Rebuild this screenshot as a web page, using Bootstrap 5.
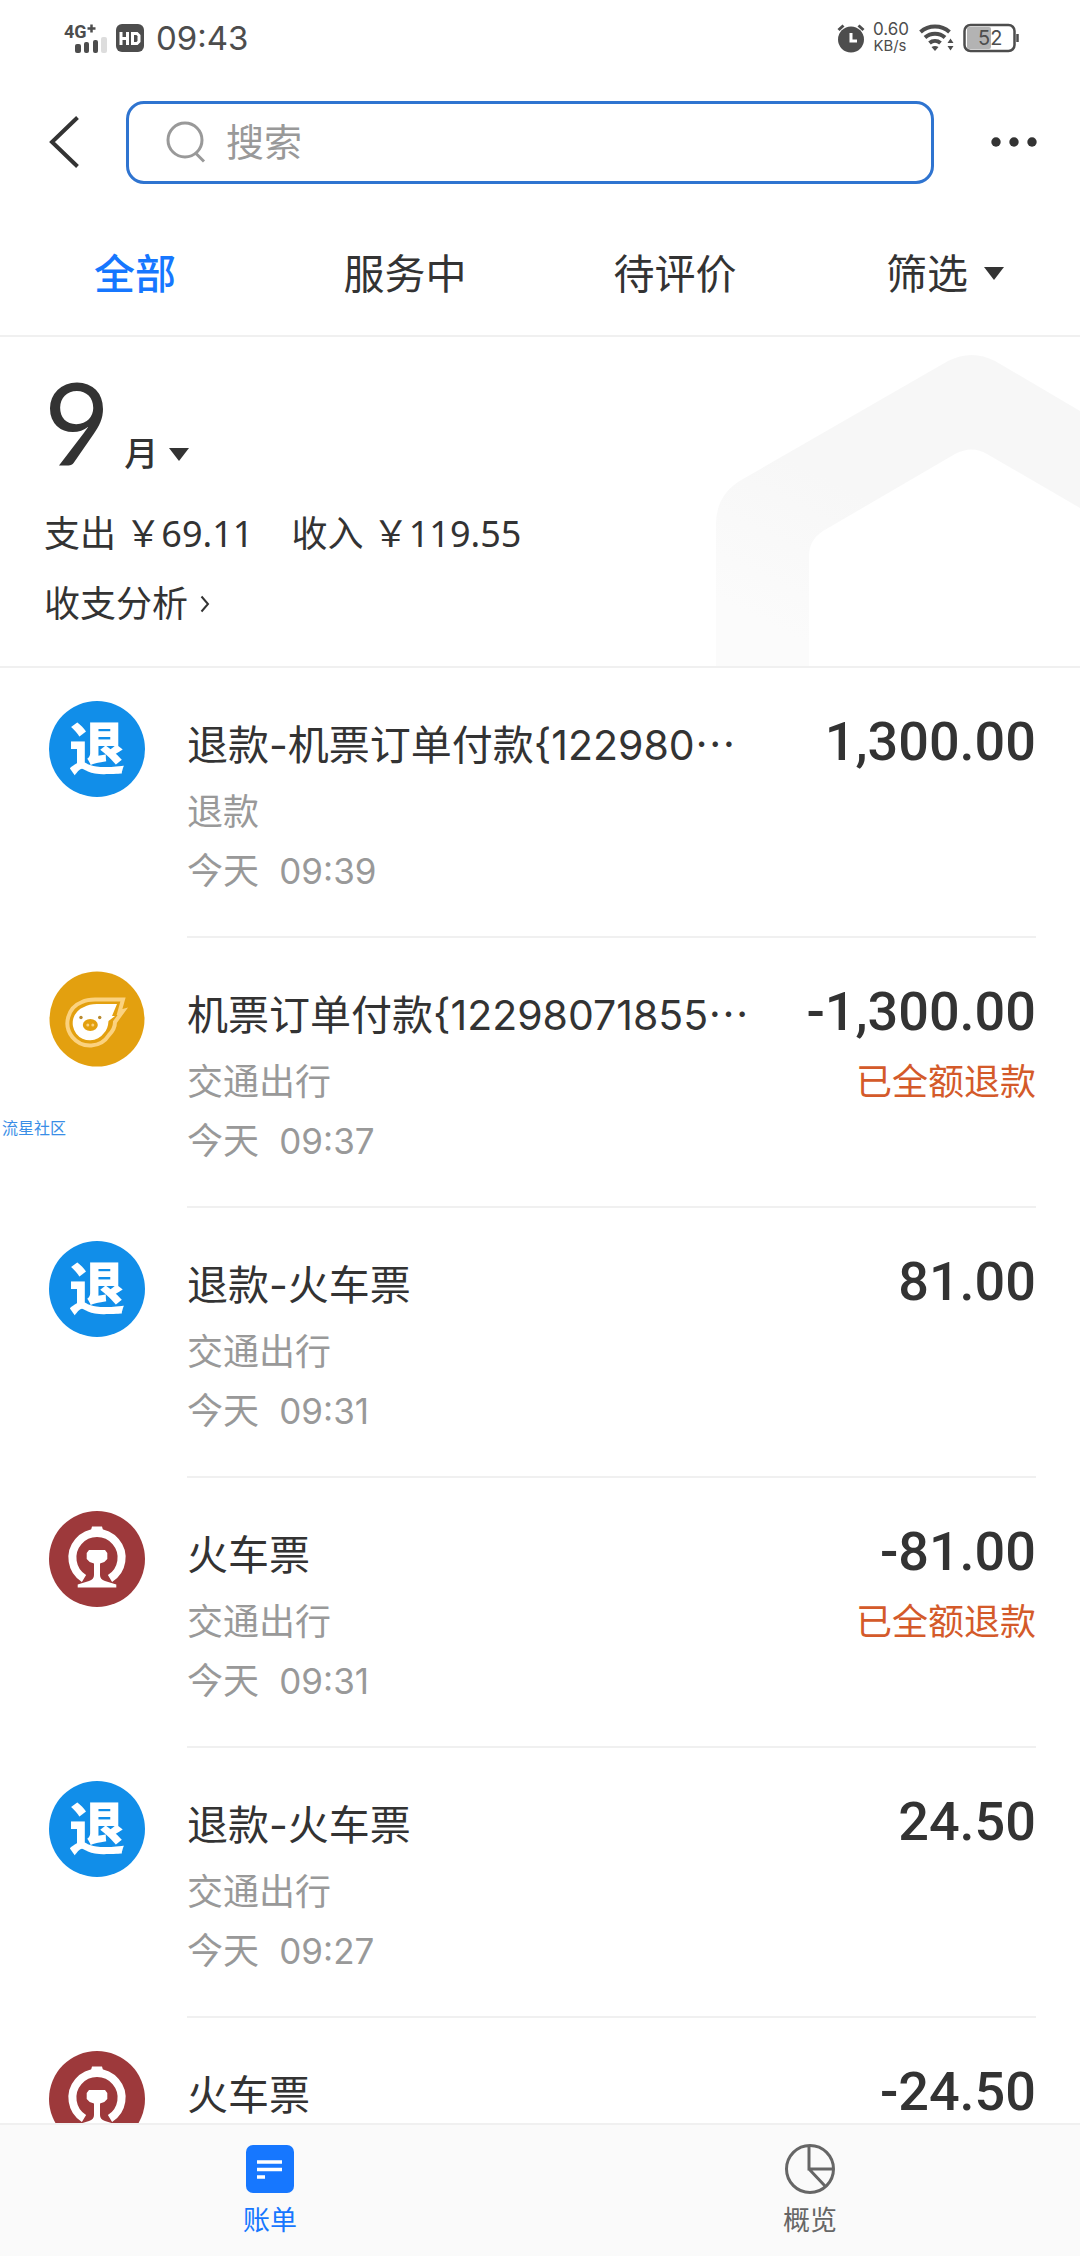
<!DOCTYPE html>
<html lang="zh-CN">
<head>
<meta charset="utf-8">
<meta name="viewport" content="width=device-width, initial-scale=1">
<title>账单</title>
<link href="https://cdn.jsdelivr.net/npm/bootstrap@5.3.0/dist/css/bootstrap.min.css" rel="stylesheet">
<style>
  :root { --ink: #333; --muted: #999; --brand: #1677ff; --rule: #f0f0f0; }
  body { font-family: Inter, "Noto Sans CJK SC", sans-serif; color: var(--ink); background: #fff; }
  svg { display: block; flex: none; }
  .screen { height: 100vh; }
  .status-bar { height: 76px; padding: 0 61px 0 64px; color: #4d4d4d; }
  .clock { font-size: 33px; line-height: 40px; }
  .rate { font-size: 17px; line-height: 17px; width: 34px; }
  .search-bar { height: 132px; padding: 0 43px 0 49px; }
  .search-box { height: 83px; margin: 0 57px 0 47px; padding: 0 37px; gap: 20px; border: 3px solid #2f74d0; border-radius: 18px; color: var(--muted); }
  .search-box input { font-size: 38px; line-height: 44px; padding: 0; border: 0; background: none; outline: none; }
  .search-box input::placeholder { color: var(--muted); opacity: 1; }
  .filter-tabs { height: 129px; padding-top: 4px; border-bottom: 2px solid var(--rule); }
  .filter-tabs .nav-link { font-size: 41px; line-height: 48px; padding: 0; color: var(--ink); white-space: nowrap; gap: 16px; }
  .filter-tabs .nav-link.active { color: var(--brand); font-weight: 500; }
  .month-panel { height: 331px; border-bottom: 2px solid var(--rule); }
  .month-panel > .house { position: absolute; right: 0; bottom: 0; }
  .month-body { padding: 35px 45px 0 44px; }
  .month-pick, .month-pick:hover { gap: 14px; color: var(--ink); }
  .month-num { font-family: Lato, sans-serif; font-size: 114px; line-height: 100px; }
  .month-unit { font-size: 34px; line-height: 36px; font-weight: 500; gap: 11px; }
  .totals { font-family: "Noto Sans", "Noto Sans CJK SC", sans-serif; font-size: 36px; line-height: 44px; gap: 38px; margin-top: 40px; }
  .analysis { font-size: 36px; line-height: 44px; gap: 12px; margin-top: 26px; color: var(--ink); }
  .bill-row { height: 270px; padding: 33px 44px 0 49px; gap: 42px; }
  .bill-icon { width: 96px; height: 96px; background: #118ee9; color: #fff; font-size: 56px; font-weight: 900; line-height: 96px; }
  .bill-body { border-bottom: 2px solid var(--rule); padding-top: 17px; gap: 24px; }
  .bill-title { font-size: 41px; line-height: 48px; margin-top: 3px; }
  .dots { font-family: "Noto Sans CJK SC", sans-serif; line-height: 1; }
  .bill-meta { font-size: 36px; line-height: 44px; color: var(--muted); }
  .bill-meta.kind { margin-top: 21px; }
  .bill-meta.time { margin-top: 15px; }
  .bill-meta .hm { font-size: 35px; }
  .amount { font-family: Roboto, sans-serif; font-weight: 500; font-size: 54px; line-height: 48px; }
  .refunded { font-size: 36px; line-height: 44px; margin-top: 24px; color: #d45a2a; }
  .side-tag { position: absolute; left: 2px; top: 1118px; font-size: 16px; line-height: 20px; color: #3a8ee6; }
  .bottom-nav { height: 133px; background: #fafafa; border-top: 2px solid var(--rule); }
  .bottom-nav .nav-link { padding: 18px 0 0; gap: 10px; font-size: 27px; line-height: 32px; color: #666; }
  .bottom-nav .nav-link.active { color: var(--brand); }
</style>
<script src="https://cdn.jsdelivr.net/npm/bootstrap@5.3.0/dist/js/bootstrap.bundle.min.js"></script>
</head>
<body>
<svg width="0" height="0" class="position-absolute" aria-hidden="true">
  <symbol id="railway" viewBox="0 0 96 96">
    <circle cx="48" cy="48" r="48" fill="#9d393b"/>
    <path d="M35 67.500A24.600 24.600 0 1 1 61 67.500" fill="none" stroke="#fff" stroke-width="8"/>
    <path d="M38 21l4-2 1-3.500h10l1 3.500 4 2z" fill="#fff"/>
    <path d="M40 39h16l2.300 3v6l-3 3-4.300 1.500V64q0 4.500 5 6l11.300 3.500v3H28.700v-3L40 70q5-1.500 5-6V52.500L40.700 51l-3-3v-6z" fill="#fff"/>
  </symbol>
</svg>
<div class="screen d-flex flex-column overflow-hidden position-relative">
  <header class="status-bar d-flex align-items-center justify-content-between flex-shrink-0">
    <div class="d-flex align-items-center">
      <svg width="44" height="32" viewBox="0 0 44 32" aria-label="4G+">
        <text x="0" y="16" font-size="18" font-weight="700" fill="#4d4d4d" font-family="Roboto">4G</text>
        <path d="M23.500 6.500h8M27.500 2.500v8" stroke="#4d4d4d" stroke-width="2.500"/>
        <g fill="#4d4d4d"><rect x="11" y="22" width="6" height="9" rx="2"/><rect x="20" y="20" width="5" height="11" rx="2"/><rect x="29" y="18" width="5" height="13" rx="2"/></g>
        <rect x="37" y="15" width="6" height="16" rx="2" fill="#ddd"/>
      </svg>
      <svg class="ms-2" width="28" height="28" viewBox="0 0 28 28" aria-label="HD">
        <rect width="28" height="28" rx="6" fill="#4d4d4d"/>
        <path d="M5 8v13M11.500 8v13M5 14.500h6.500M16.500 9.500v10h4.500l2-2v-6l-2-2z" fill="none" stroke="#fff" stroke-width="3"/>
      </svg>
      <span class="clock ms-2 ps-1">09:43</span>
    </div>
    <div class="d-flex align-items-center gap-2">
      <svg width="28" height="30" viewBox="0 0 28 30" aria-label="闹钟">
        <circle cx="14" cy="16.500" r="13" fill="#4d4d4d"/>
        <path d="M1.500 7l5-4.500M26.500 7l-5-4.500" stroke="#4d4d4d" stroke-width="3"/>
        <path d="M14 10v8h6" fill="none" stroke="#fff" stroke-width="3"/>
      </svg>
      <div class="rate text-center"><div>0.60</div><small class="d-block">KB/s</small></div>
      <svg class="ms-1" width="36" height="28" viewBox="0 0 36 28" aria-label="Wi-Fi">
        <g fill="none" stroke="#4d4d4d" stroke-width="4"><path d="M1.500 8a22 22 0 0 1 29 0M6 13.500a15 15 0 0 1 20 0M10.500 19a8.500 8.500 0 0 1 11 0"/></g>
        <path d="M12.500 23q3.500-2 7 0L16 27z" fill="#4d4d4d"/>
        <path d="M28.500 19l3-4.500 3 4.500zM28.500 22l3 4.500 3-4.500z" fill="#4d4d4d"/>
      </svg>
      <svg width="56" height="30" viewBox="0 0 56 30" aria-label="52%">
        <rect x="4" y="4" width="24" height="22" rx="2" fill="#b3b3b3"/>
        <rect x="1.500" y="2" width="50" height="26" rx="6" fill="none" stroke="#4d4d4d" stroke-width="2.500"/>
        <path d="M54.500 11v8" stroke="#4d4d4d" stroke-width="2.500"/>
        <text x="15" y="22" font-size="20" fill="#4d4d4d" font-family="Inter">52</text>
      </svg>
    </div>
  </header>

  <form class="search-bar d-flex align-items-center flex-shrink-0">
    <button type="button" class="btn p-0 border-0" aria-label="返回">
      <svg width="30" height="52" viewBox="0 0 30 52"><path d="M28.500 1.500L3 26l25.500 24.500" fill="none" stroke="#333" stroke-width="4"/></svg>
    </button>
    <div class="search-box d-flex align-items-center flex-grow-1">
      <svg width="40" height="42" viewBox="0 0 40 42"><g fill="none" stroke="#999" stroke-width="3"><circle cx="19" cy="19" r="17"/><path d="M29.500 32l8.500 8.500"/></g></svg>
      <input type="search" class="flex-grow-1 w-100" placeholder="搜索" aria-label="搜索">
    </div>
    <button type="button" class="btn p-0 border-0" aria-label="更多">
      <svg width="46" height="10" viewBox="0 0 46 10"><g fill="#333"><circle cx="5" cy="5" r="4.700"/><circle cx="23" cy="5" r="4.700"/><circle cx="41" cy="5" r="4.700"/></g></svg>
    </button>
  </form>

  <nav class="filter-tabs nav nav-fill flex-nowrap align-items-center flex-shrink-0" aria-label="筛选">
    <a class="nav-link active col-3" href="#">全部</a>
    <a class="nav-link col-3" href="#">服务中</a>
    <a class="nav-link col-3" href="#">待评价</a>
    <a class="nav-link col-3 d-flex align-items-center justify-content-center" href="#">筛选
      <svg width="20" height="13" viewBox="0 0 20 13"><path d="M0 0h20L10 13z" fill="#333"/></svg></a>
  </nav>

  <section class="month-panel position-relative flex-shrink-0">
    <svg class="house" width="364" height="313" viewBox="0 0 364 313" aria-hidden="true">
      <defs><linearGradient id="fade" gradientUnits="userSpaceOnUse" x1="30" y1="260" x2="100" y2="120"><stop offset="0" stop-color="#fbfbfb"/><stop offset="1" stop-color="#f7f7f7"/></linearGradient></defs>
      <path d="M0 315V171Q0 141 27 126L232 8Q256-4 279 8L364 58V155L271 101Q256 92 239 101L107 178Q93 187 93 203V315z" fill="url(#fade)"/>
    </svg>
    <div class="month-body position-relative">
      <button type="button" class="btn p-0 border-0 text-start month-pick d-flex align-items-baseline">
        <span class="month-num">9</span>
        <span class="month-unit d-flex align-items-center">月<svg width="20" height="13" viewBox="0 0 20 13"><path d="M0 0h20L10 13z" fill="#333"/></svg></span>
      </button>
      <div class="totals d-flex"><span>支出 ￥69.11</span><span>收入 ￥119.55</span></div>
      <a class="analysis d-inline-flex align-items-center text-decoration-none" href="#">收支分析
        <svg width="10" height="18" viewBox="0 0 10 18"><path d="M1.500 1.500L8 9l-6.500 7.500" fill="none" stroke="#333" stroke-width="2"/></svg></a>
    </div>
  </section>

  <main class="flex-grow-1 overflow-hidden">
    <ul class="list-unstyled m-0">
      <li class="bill-row d-flex">
        <span class="bill-icon rounded-circle text-center flex-shrink-0">退</span>
        <div class="bill-body d-flex flex-grow-1 justify-content-between">
          <div><div class="bill-title text-nowrap">退款-机票订单付款{122980<span class="dots">…</span></div><div class="bill-meta kind">退款</div><div class="bill-meta time">今天&nbsp; <span class="hm">09:39</span></div></div>
          <div class="text-end"><div class="amount">1,300.00</div></div>
        </div>
      </li>
      <li class="bill-row d-flex">
        <svg width="96" height="96" viewBox="0 0 96 96" aria-label="飞猪">
          <circle cx="48" cy="48" r="47.500" fill="#e3a00f"/>
          <path d="M74 28.500H46Q38 28.500 33 31A22.500 22.500 0 1 0 60 64Q66 58 66 51L74 40 70.500 41z" fill="none" stroke="#fbd27f" stroke-width="4"/>
          <path d="M68 33H48Q40 33 35 36A17.200 17.200 0 1 0 55 62Q59 58 59.500 50L66 45 63 45z" fill="#fff"/>
          <ellipse cx="41.300" cy="54" rx="7.500" ry="6" fill="#e3a00f"/><g fill="#fbd27f"><circle cx="38.800" cy="54" r="1.500"/><circle cx="43.800" cy="54" r="1.500"/></g>
          <g fill="#b98a2e"><circle cx="32" cy="46.500" r="1.700"/><circle cx="50.700" cy="46.500" r="1.700"/></g>
        </svg>
        <div class="bill-body d-flex flex-grow-1 justify-content-between">
          <div><div class="bill-title text-nowrap">机票订单付款{12298071855<span class="dots">…</span></div><div class="bill-meta kind">交通出行</div><div class="bill-meta time">今天&nbsp; <span class="hm">09:37</span></div></div>
          <div class="text-end"><div class="amount">-1,300.00</div><div class="refunded">已全额退款</div></div>
        </div>
      </li>
      <li class="bill-row d-flex">
        <span class="bill-icon rounded-circle text-center flex-shrink-0">退</span>
        <div class="bill-body d-flex flex-grow-1 justify-content-between">
          <div><div class="bill-title text-nowrap">退款-火车票</div><div class="bill-meta kind">交通出行</div><div class="bill-meta time">今天&nbsp; <span class="hm">09:31</span></div></div>
          <div class="text-end"><div class="amount">81.00</div></div>
        </div>
      </li>
      <li class="bill-row d-flex">
        <svg width="96" height="96" aria-label="铁路"><use href="#railway"/></svg>
        <div class="bill-body d-flex flex-grow-1 justify-content-between">
          <div><div class="bill-title text-nowrap">火车票</div><div class="bill-meta kind">交通出行</div><div class="bill-meta time">今天&nbsp; <span class="hm">09:31</span></div></div>
          <div class="text-end"><div class="amount">-81.00</div><div class="refunded">已全额退款</div></div>
        </div>
      </li>
      <li class="bill-row d-flex">
        <span class="bill-icon rounded-circle text-center flex-shrink-0">退</span>
        <div class="bill-body d-flex flex-grow-1 justify-content-between">
          <div><div class="bill-title text-nowrap">退款-火车票</div><div class="bill-meta kind">交通出行</div><div class="bill-meta time">今天&nbsp; <span class="hm">09:27</span></div></div>
          <div class="text-end"><div class="amount">24.50</div></div>
        </div>
      </li>
      <li class="bill-row d-flex">
        <svg width="96" height="96" aria-label="铁路"><use href="#railway"/></svg>
        <div class="bill-body d-flex flex-grow-1 justify-content-between">
          <div><div class="bill-title text-nowrap">火车票</div></div>
          <div class="text-end"><div class="amount">-24.50</div></div>
        </div>
      </li>
    </ul>
  </main>
  <span class="side-tag">流星社区</span>

  <nav class="bottom-nav nav nav-fill flex-shrink-0" aria-label="底部导航">
    <a class="nav-link active col-6 d-flex flex-column align-items-center" href="#">
      <svg width="52" height="52" viewBox="0 0 52 52"><rect x="2" y="2" width="48" height="48" rx="7" fill="#1677ff"/><path d="M13 19h25M13 26.500h25M13 34h8" stroke="#fff" stroke-width="3.500"/></svg>
      账单</a>
    <a class="nav-link col-6 d-flex flex-column align-items-center" href="#">
      <svg width="52" height="52" viewBox="0 0 52 52"><g fill="none" stroke="#666" stroke-width="3"><circle cx="26" cy="26" r="23.500"/><path d="M25 2.500V26h24.500M25 26l16 17"/></g></svg>
      概览</a>
  </nav>
</div>
</body>
</html>
